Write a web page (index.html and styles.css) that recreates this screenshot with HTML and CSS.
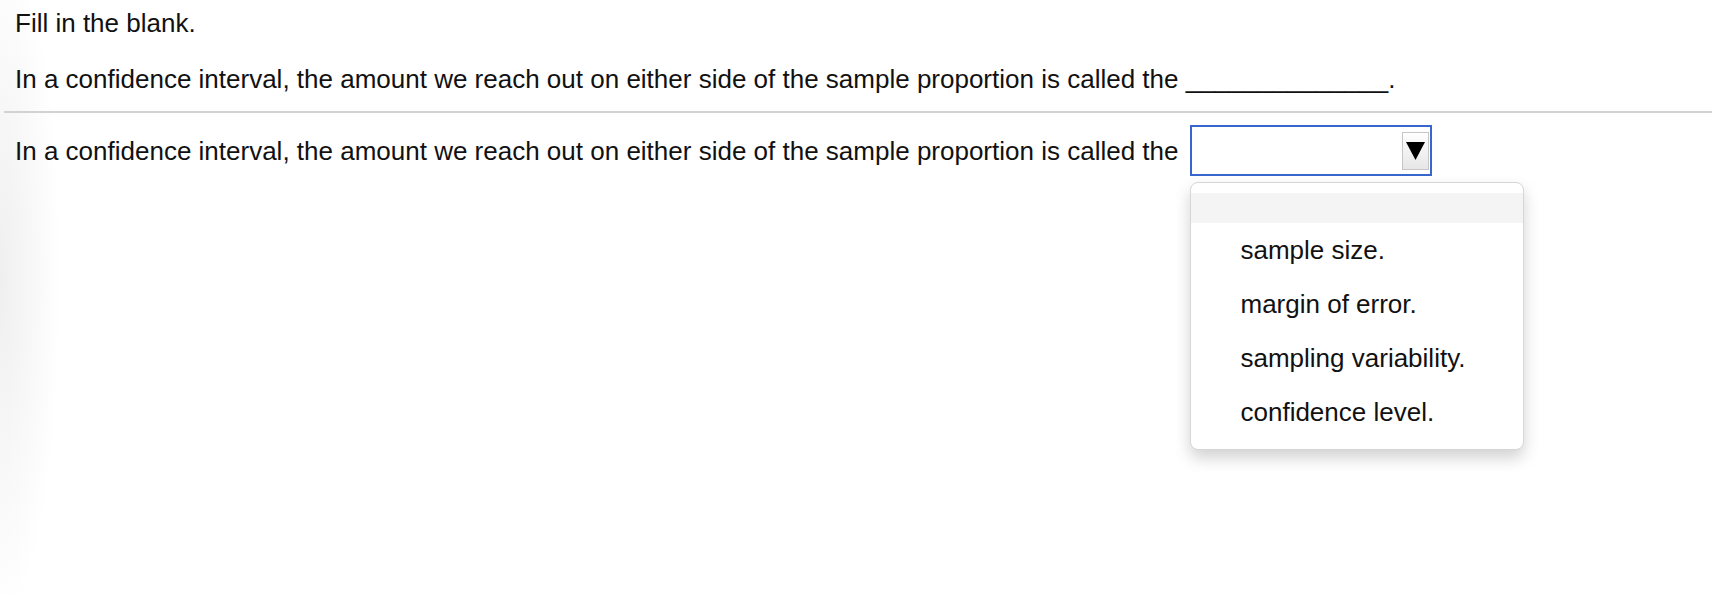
FILE: index.html
```html
<!DOCTYPE html>
<html lang="en">

<head>
    <meta charset="UTF-8">
    <meta name="viewport" content="width=device-width, initial-scale=1.0">
    <link rel="stylesheet" href="styles.css">
    <title>Fill in the blank</title>
</head>

<body>
    <div class="question">
        <p class="line">Fill in the blank.</p>
        <p class="line">In a confidence interval, the amount we reach out on either side of the sample proportion is called the ______________.</p>
        <hr class="divider">
        <div class="answerRow">
            <span class="line">In a confidence interval, the amount we reach out on either side of the sample proportion is called the</span>
            <div class="dropdown">
                <div class="selectBox">
                    <span class="arrowBtn">
                        <svg width="19" height="18" viewBox="0 0 19 18">
                            <polygon points="0,0 19,0 9.5,18" fill="#000" />
                        </svg>
                    </span>
                </div>
                <!-- lista abierta -->
                <ul class="menu">
                    <li class="menuItem blankItem"></li>
                    <li class="menuItem">sample size.</li>
                    <li class="menuItem">margin of error.</li>
                    <li class="menuItem">sampling variability.</li>
                    <li class="menuItem">confidence level.</li>
                </ul>
            </div>
        </div>
    </div>
</body>
</html>
```

FILE: styles.css
```css
* {
    box-sizing: border-box;
}

html {
    background: #fff;
}

body {
    margin: 0;
    min-height: 594px;
    color: #111;
    font-family: "Liberation Sans", Arial, sans-serif;
    font-size: 26px;
    line-height: 30px;
    background: radial-gradient(ellipse 60px 340px at 0 280px, #efefef, rgba(255, 255, 255, 0)) no-repeat, #fff;
}

.question {
    padding: 8px 0 0 4px;
}

.line {
    margin: 0;
    padding-left: 11px;
    white-space: nowrap;
}

.question > p.line + p.line {
    margin-top: 26px;
}

.divider {
    margin: 17px 0 0 0;
    border: 0;
    height: 2px;
    background: #d2d2d2;
}

.answerRow {
    display: flex;
    align-items: center;
    margin-top: 12px;
}

.dropdown {
    position: relative;
    margin-left: 12px;
}

.selectBox {
    width: 242px;
    height: 51px;
    border: 2px solid #3767cc;
    background: #fff;
    display: flex;
    align-items: center;
    justify-content: flex-end;
    padding-right: 1px;
}

.arrowBtn {
    width: 27px;
    height: 38px;
    border: 1px solid #c6c6c6;
    background: linear-gradient(#ffffff, #e6e6e6);
    display: flex;
    align-items: center;
    justify-content: center;
}

.arrowBtn svg {
    display: block;
}

.menu {
    position: absolute;
    top: 57px;
    left: 0;
    width: 334px;
    margin: 0;
    padding: 10px 0;
    list-style: none;
    background: #fff;
    border: 1px solid #d6d6d6;
    border-radius: 8px;
    box-shadow: 0 8px 16px rgba(0, 0, 0, 0.18);
}

.menuItem {
    height: 54px;
    line-height: 54px;
    padding-left: 49px;
    white-space: nowrap;
}

.blankItem {
    height: 30px;
    background: #f4f4f4;
}
```
